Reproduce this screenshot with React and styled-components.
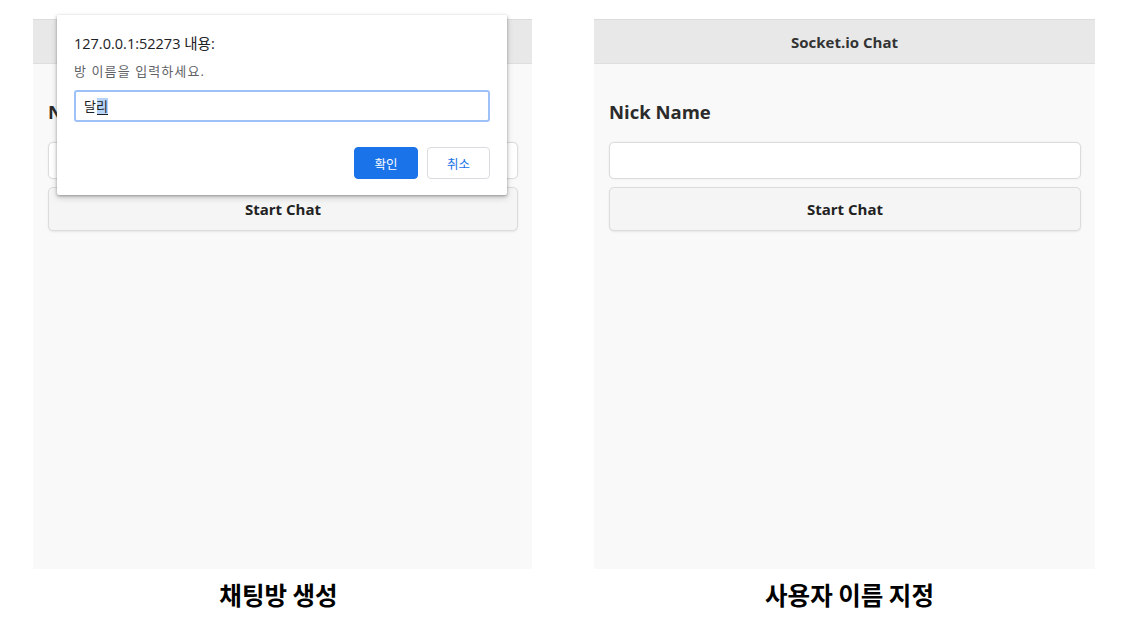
import React from 'react'
import styled, { createGlobalStyle } from 'styled-components'

const GlobalStyle = createGlobalStyle`
    html, body {
        margin: 0;
        background: #ffffff;
    }

    body {
        font-family: "Open Sans", "Noto Sans CJK KR", sans-serif;
    }

    * {
        box-sizing: border-box;
    }
`

const Page = styled.div`
    display: flex;
    gap: 62px;
    padding: 19px 0 0 33px;
`

const Figure = styled.div`
    display: flex;
    flex-direction: column;
    width: ${props => props.width}px;
`

const Screen = styled.div`
    position: relative;
    height: 550px;
    background-color: #f9f9f9;
`

const Header = styled.div`
    display: flex;
    align-items: center;
    justify-content: center;
    height: 45px;
    background-color: #e8e8e8;
    border-top: 1px solid #dcdcdc;
    border-bottom: 1px solid #dedede;
    font-size: 15px;
    font-weight: 700;
    color: #333;
`

const Body = styled.div`
    display: flex;
    flex-direction: column;
    padding: 14px 14px 0 15px;
`

const Label = styled.h3`
    margin: 20px 0 17px 0;
    font-size: 18.5px;
    line-height: 27px;
    font-weight: 700;
    color: #2b2b2b;
`

const NameInput = styled.div`
    height: 37px;
    background-color: #fff;
    border: 1px solid #dcdcdc;
    border-radius: 5px;
    box-shadow: 0 0 2px rgba(0, 0, 0, 0.08);
`

const StartButton = styled.button`
    margin-top: 8px;
    height: 44px;
    background-color: #f5f5f5;
    border: 1px solid #dcdcdc;
    border-radius: 5px;
    box-shadow: 0 1px 2px rgba(0, 0, 0, 0.08);
    font-family: inherit;
    font-size: 15px;
    font-weight: 700;
    color: #222;
`

// shift > 0 pushes the caption right, < 0 pulls it left
const Caption = styled.div`
    margin-top: 9px;
    padding-left: ${props => Math.max(props.shift || 0, 0)}px;
    padding-right: ${props => Math.max(-(props.shift || 0), 0)}px;
    text-align: center;
    font-family: "Noto Sans CJK KR", sans-serif;
    font-size: 24.5px;
    line-height: 33px;
    font-weight: 700;
    color: #000;
`

/* the browser prompt() lying over the left screen */
const Prompt = styled.div`
    position: absolute;
    top: -4px;
    left: 24px;
    width: 450px;
    height: 180px;
    display: flex;
    flex-direction: column;
    padding: 20px 17px 16px 17px;
    background-color: #fff;
    border-radius: 0 0 2px 2px;
    box-shadow: 0 1px 3px rgba(60, 64, 67, 0.45), 0 3px 6px rgba(60, 64, 67, 0.2);
    font-family: "Open Sans", "Noto Sans CJK KR", sans-serif;
`

const PromptTitle = styled.div`
    font-size: 14.5px;
    line-height: 18px;
    color: #202124;
`

const PromptMessage = styled.div`
    margin-top: 10px;
    font-size: 13px;
    line-height: 17px;
    letter-spacing: 1.1px;
    color: #5f6368;
`

const PromptField = styled.div`
    display: flex;
    align-items: center;
    margin-top: 10px;
    height: 32px;
    padding: 0 8px;
    border: 2px solid #9ec2f7;
    border-radius: 3px;
    font-size: 13px;
    color: #202124;
`

/* second syllable shown as the selected text */
const FieldText = styled.span`
    line-height: 17px;
    background:
        linear-gradient(#202124, #202124) 13px 100% / 13px 1px no-repeat,
        linear-gradient(to right, transparent 13px, #b5d3f8 13px) 0 0 / 26px 100% no-repeat;
`

const PromptActions = styled.div`
    display: flex;
    justify-content: flex-end;
    gap: 9px;
    margin-top: auto;
`

const PromptButton = styled.button`
    width: ${props => props.wide}px;
    height: 32px;
    border-radius: 4px;
    font-family: inherit;
    font-size: 12.5px;
    border: 1px solid ${props => (props.primary ? '#1a73e8' : '#dadce0')};
    background-color: ${props => (props.primary ? '#1a73e8' : '#fff')};
    color: ${props => (props.primary ? '#fff' : '#1a73e8')};
`

const ChatScreen = ({ children }) => (
    <Screen>
        <Header>Socket.io Chat</Header>
        <Body>
            <Label>Nick Name</Label>
            <NameInput />
            <StartButton>Start Chat</StartButton>
        </Body>
        {children}
    </Screen>
)

const App = () => {
    return (
        <>
            <GlobalStyle />
            <Page>
                <Figure width={499}>
                    <ChatScreen>
                        <Prompt>
                            <PromptTitle>127.0.0.1:52273 내용:</PromptTitle>
                            <PromptMessage>방 이름을 입력하세요.</PromptMessage>
                            <PromptField>
                                <FieldText>달리</FieldText>
                            </PromptField>
                            <PromptActions>
                                <PromptButton primary wide={64}>확인</PromptButton>
                                <PromptButton wide={63}>취소</PromptButton>
                            </PromptActions>
                        </Prompt>
                    </ChatScreen>
                    <Caption shift={-8}>채팅방 생성</Caption>
                </Figure>

                <Figure width={501}>
                    <ChatScreen />
                    <Caption shift={10}>사용자 이름 지정</Caption>
                </Figure>
            </Page>
        </>
    )
}

export default App
